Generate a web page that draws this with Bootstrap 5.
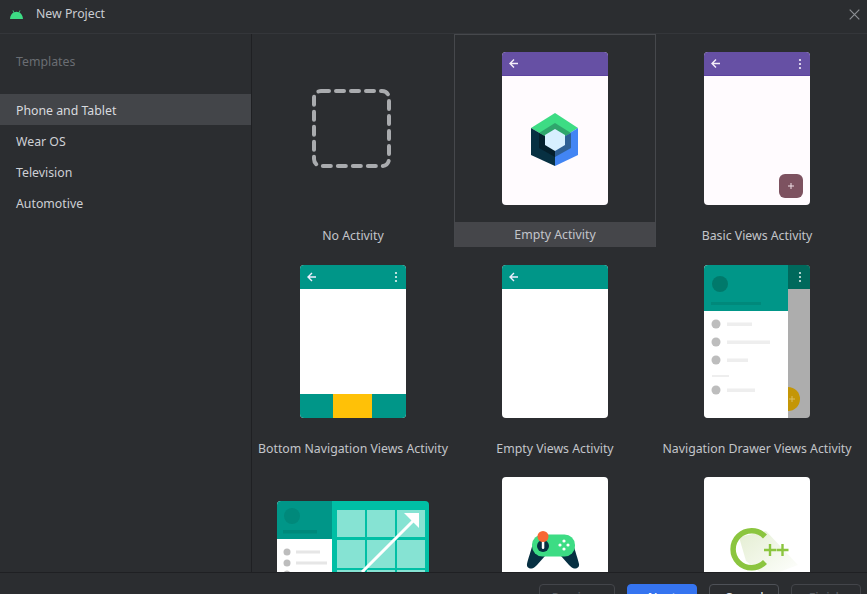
<!DOCTYPE html>
<html lang="en">
<head>
<meta charset="utf-8">
<title>New Project</title>
<link href="https://cdn.jsdelivr.net/npm/bootstrap@5.3.0/dist/css/bootstrap.min.css" rel="stylesheet">
<style>
html,body{height:100%;overflow:hidden}
body{background:#2b2d30;color:#dfe1e5;font-family:"Noto Sans","Open Sans",sans-serif;font-size:12.3px}
.shell{height:594px;width:867px;overflow:hidden}
.titlebar{height:34px;border-bottom:1px solid #34363a;padding:0 7px 4px 10px}
.titlebar .ttl{margin-left:13px;color:#c9ccd2;font-size:12.3px}
.middle{min-height:0}
.side{width:252px;border-right:1px solid #1f2023;background:#2b2d30}
.sidehead{height:60px;color:#6a6d73;padding:0 0 3px 16px}
.sidelist .list-group-item{background:transparent;border:0;color:#ced0d5;height:31px;padding:1px 0 0 16px;line-height:31px;font-size:12.3px}
.sidelist .list-group-item.active{background:#434549;color:#d8dadf}
.gallery{display:grid;grid-template-columns:repeat(3,202px);grid-auto-rows:212.7px;overflow:hidden;align-content:start}
.tile{position:relative;padding-top:17px;text-align:center;border:1px solid transparent}
.tile svg.thumb{display:block;margin:0 auto}
.tile svg.wider{margin-top:24px}
.tile .cap{position:absolute;left:-1px;right:-1px;top:188px;height:25px;line-height:25px;color:#c3c5ca;white-space:nowrap}
.tile.picked{border-color:#46484c}
.tile.picked .cap{background:#45464a;top:187px;left:0;right:0;height:25px}
.bottombar{height:22px;overflow:hidden;border-top:1px solid #1f2023;padding-top:11px;padding-right:6px}
.bottombar .btn{flex:none;height:28px;width:70px;padding:0;font-size:12.3px;line-height:22px;background:transparent;border:1px solid #4e5157;border-radius:4px;color:#dfe1e5;font-weight:500}
.bottombar .btn.wide{width:76px}
.bottombar .btn.go{background:#3574f0;border-color:#3574f0;color:#fff;font-weight:600}
.bottombar .btn:disabled{opacity:1;border-color:#43454a;color:#5a5d63}
</style>
</head>
<body>
<div class="shell d-flex flex-column">
  <div class="titlebar d-flex align-items-center flex-shrink-0">
    <svg width="13" height="9" viewBox="0 0 13 9" aria-hidden="true"><path d="M0 9C.2 6 1.6 3.6 3.600 2.500L2.500.6l.6-.4L4.300 2.200a6 6 0 0 1 4.400 0L9.900.2l.6.4L9.400 2.500C11.400 3.600 12.800 6 13 9z" fill="#3ddc84"/></svg>
    <span class="ttl">New Project</span>
    <svg class="ms-auto" width="11" height="11" viewBox="0 0 11 11" aria-hidden="true"><path d="M.7.7l9.600 9.600M10.300.7L.7 10.300" stroke="#8c8f94" stroke-width="1.200"/></svg>
  </div>
  <div class="middle d-flex flex-grow-1">
    <div class="side flex-shrink-0">
      <div class="sidehead d-flex align-items-center">Templates</div>
      <div class="list-group list-group-flush sidelist">
        <div class="list-group-item active">Phone and Tablet</div>
        <div class="list-group-item">Wear OS</div>
        <div class="list-group-item">Television</div>
        <div class="list-group-item">Automotive</div>
      </div>
    </div>
    <div class="gallery flex-grow-1">
      <div class="tile">
        <svg class="thumb" width="106" height="153" viewBox="0 0 106 153" aria-hidden="true"><rect x="14" y="39" width="75" height="75" rx="7" fill="none" stroke="#a9abae" stroke-width="4" stroke-linecap="round" stroke-dasharray="8 7"/></svg>
        <div class="cap">No Activity</div>
      </div>
      <div class="tile picked">
        <svg class="thumb" width="106" height="153" viewBox="0 0 106 153" aria-hidden="true">
          <rect width="106" height="153" rx="4" fill="#fffbfe"/>
          <path d="M0 24V4a4 4 0 0 1 4-4h98a4 4 0 0 1 4 4v20z" fill="#6650a4"/>
          <rect y="23.300" width="106" height=".7" fill="#5a3ea0"/>
          <path d="M8 11.500h8M12 7.500l-4 4 4 4" fill="none" stroke="#f4eef9" stroke-width="1.400"/>
          <path d="M29 76L53 61l23 15-23 14z" fill="#3ddc84"/>
          <path d="M29 76l24 14v24l-24-11z" fill="#073042"/>
          <path d="M76 76L53 90v24l23-11z" fill="#4285f4"/>
          <path d="M37 81l16-10 16 10-16 9z" fill="#2fa56c"/>
          <path d="M37 81l16 9v15l-16-9z" fill="#041f2c"/>
          <path d="M69 81l-16 9v15l16-9z" fill="#2e5f94"/>
          <path d="M53 77l10 6v10l-10 6-10-6V83z" fill="#d7efff"/>
        </svg>
        <div class="cap">Empty Activity</div>
      </div>
      <div class="tile">
        <svg class="thumb" width="106" height="153" viewBox="0 0 106 153" aria-hidden="true">
          <rect width="106" height="153" rx="4" fill="#fffbfe"/>
          <path d="M0 24V4a4 4 0 0 1 4-4h98a4 4 0 0 1 4 4v20z" fill="#6650a4"/>
          <rect y="23.300" width="106" height=".7" fill="#5a3ea0"/>
          <path d="M8 11.500h8M12 7.500l-4 4 4 4" fill="none" stroke="#f4eef9" stroke-width="1.400"/>
          <circle cx="96" cy="8" r="1.100" fill="#f4eef9"/><circle cx="96" cy="12" r="1.100" fill="#f4eef9"/><circle cx="96" cy="16" r="1.100" fill="#f4eef9"/>
          <rect x="75" y="122" width="24" height="24" rx="6" fill="#7d5260"/>
          <path d="M87 131v6M84 134h6" stroke="#f0e0e6"/>
        </svg>
        <div class="cap">Basic Views Activity</div>
      </div>
      <div class="tile">
        <svg class="thumb" width="106" height="153" viewBox="0 0 106 153" aria-hidden="true">
          <rect width="106" height="153" rx="4" fill="#fff"/>
          <path d="M0 24V4a4 4 0 0 1 4-4h98a4 4 0 0 1 4 4v20z" fill="#009688"/>
          <path d="M8 12h8M12 8l-4 4 4 4" fill="none" stroke="#eef" stroke-width="1.400"/>
          <circle cx="96" cy="8" r="1.100" fill="#e6f5f3"/><circle cx="96" cy="12" r="1.100" fill="#e6f5f3"/><circle cx="96" cy="16" r="1.100" fill="#e6f5f3"/>
          <path d="M0 129h106v20a4 4 0 0 1-4 4H4a4 4 0 0 1-4-4z" fill="#009688"/>
          <rect x="33" y="129" width="39" height="24" fill="#ffc107"/>
        </svg>
        <div class="cap">Bottom Navigation Views Activity</div>
      </div>
      <div class="tile">
        <svg class="thumb" width="106" height="153" viewBox="0 0 106 153" aria-hidden="true">
          <rect width="106" height="153" rx="4" fill="#fff"/>
          <path d="M0 24V4a4 4 0 0 1 4-4h98a4 4 0 0 1 4 4v20z" fill="#009688"/>
          <path d="M8 12h8M12 8l-4 4 4 4" fill="none" stroke="#eef" stroke-width="1.400"/>
        </svg>
        <div class="cap">Empty Views Activity</div>
      </div>
      <div class="tile">
        <svg class="thumb" width="106" height="153" viewBox="0 0 106 153" aria-hidden="true">
          <rect width="106" height="153" rx="4" fill="#adadad"/>
          <path d="M84 0h18a4 4 0 0 1 4 4v20H84z" fill="#00695c"/>
          <circle cx="96" cy="8" r="1.100" fill="#d5e8e5"/><circle cx="96" cy="12" r="1.100" fill="#d5e8e5"/><circle cx="96" cy="16" r="1.100" fill="#d5e8e5"/>
          <circle cx="84" cy="134" r="12" fill="#c49606"/>
          <path d="M88 131v6M85 134h6" stroke="#d9bd62"/>
          <path d="M84 0H4a4 4 0 0 0-4 4v145a4 4 0 0 0 4 4h80z" fill="#fff"/>
          <path d="M84 0H4a4 4 0 0 0-4 4v42h84z" fill="#009688"/>
          <circle cx="16" cy="19" r="8" fill="#00796b"/>
          <rect x="7" y="37" width="50" height="3" fill="#00897b"/>
          <g fill="#bdbdbd"><circle cx="12" cy="59" r="4.500"/><circle cx="12" cy="77" r="4.500"/><circle cx="12" cy="95" r="4.500"/><circle cx="12" cy="125" r="4.500"/></g>
          <g fill="#eee"><rect x="23" y="57.500" width="25" height="3.500"/><rect x="23" y="75.500" width="43" height="3.500"/><rect x="23" y="93.500" width="21" height="3.500"/><rect x="8" y="110" width="17" height="2"/><rect x="23" y="123.500" width="28" height="3.500"/></g>
        </svg>
        <div class="cap">Navigation Drawer Views Activity</div>
      </div>
      <div class="tile">
        <svg class="thumb wider" width="152" height="153" viewBox="0 0 152 153" aria-hidden="true">
          <rect width="152" height="153" rx="4" fill="#00bfa5"/>
          <path d="M55 0H4a4 4 0 0 0-4 4v149h55z" fill="#fff"/>
          <path d="M55 0H4a4 4 0 0 0-4 4v34h55z" fill="#009688"/>
          <circle cx="15" cy="15" r="8" fill="#00897b"/>
          <rect x="6" y="29" width="34" height="3.500" fill="#00897b"/>
          <g fill="#bdbdbd"><circle cx="10" cy="51" r="3.500"/><circle cx="10" cy="62" r="3.500"/><circle cx="10" cy="73" r="3.500"/></g>
          <g fill="#e6e6e6"><rect x="19" y="49.500" width="24" height="3"/><rect x="19" y="60.500" width="31" height="3"/></g>
          <g fill="#86e3d3"><rect x="60" y="9" width="28" height="27"/><rect x="90" y="9" width="28" height="27"/><rect x="120" y="9" width="28" height="27"/><rect x="60" y="39" width="28" height="28"/><rect x="90" y="39" width="28" height="28"/><rect x="120" y="39" width="28" height="28"/><rect x="60" y="69" width="28" height="28"/><rect x="90" y="69" width="28" height="28"/><rect x="120" y="69" width="28" height="28"/></g>
          <path d="M85 71L139 17" stroke="#fff" stroke-width="3"/>
          <path d="M127 12h15v15z" fill="#fff"/>
        </svg>
      </div>
      <div class="tile">
        <svg class="thumb" width="106" height="153" viewBox="0 0 106 153" aria-hidden="true">
          <rect width="106" height="153" rx="4" fill="#fff"/>
          <path d="M31 66C29 74 26 82 25 87c-.6 3 2 5 5 4.500 2-.4 3-1.500 5-3.500l8-9h16l8 9c2 2 3 3.100 5 3.500 3 .5 5.600-1.500 5-4.500-1-5-4-13-6-21z" fill="#073042"/>
          <rect x="30" y="57.500" width="43" height="22" rx="10.500" fill="#3ddc84"/>
          <circle cx="41" cy="69" r="6" fill="#073042"/>
          <rect x="39.800" y="60" width="2.500" height="12" rx="1.200" fill="#fff"/>
          <circle cx="41" cy="59.500" r="5.500" fill="#f86734"/>
          <g fill="#fff"><circle cx="62" cy="64" r="1.600"/><circle cx="62" cy="72" r="1.600"/><circle cx="58" cy="68" r="1.600"/><circle cx="66" cy="68" r="1.600"/></g>
        </svg>
      </div>
      <div class="tile">
        <svg class="thumb" width="106" height="153" viewBox="0 0 106 153" aria-hidden="true">
          <defs><linearGradient id="cshade" x1="0" y1="0" x2="1" y2="1"><stop offset="0" stop-color="#e4eed2"/><stop offset="1" stop-color="#fff"/></linearGradient></defs>
          <rect width="106" height="153" rx="4" fill="#fff"/>
          <path d="M35 60l27-6 32 34-32 12-20-16z" fill="url(#cshade)"/>
          <path d="M61 59.500A18.500 18.500 0 1 0 61 85" fill="none" stroke="#8bc53f" stroke-width="5.500"/>
          <path d="M60 73h12M66 67v12M72.500 73h12M78.500 67v12" stroke="#8bc53f" stroke-width="2.400"/>
        </svg>
      </div>
    </div>
  </div>
  <div class="bottombar d-flex justify-content-end gap-2 flex-shrink-0">
    <button class="btn wide me-1" disabled>Previous</button>
    <button class="btn go me-1">Next</button>
    <button class="btn me-1">Cancel</button>
    <button class="btn" disabled>Finish</button>
  </div>
</div>
</body>
</html>
